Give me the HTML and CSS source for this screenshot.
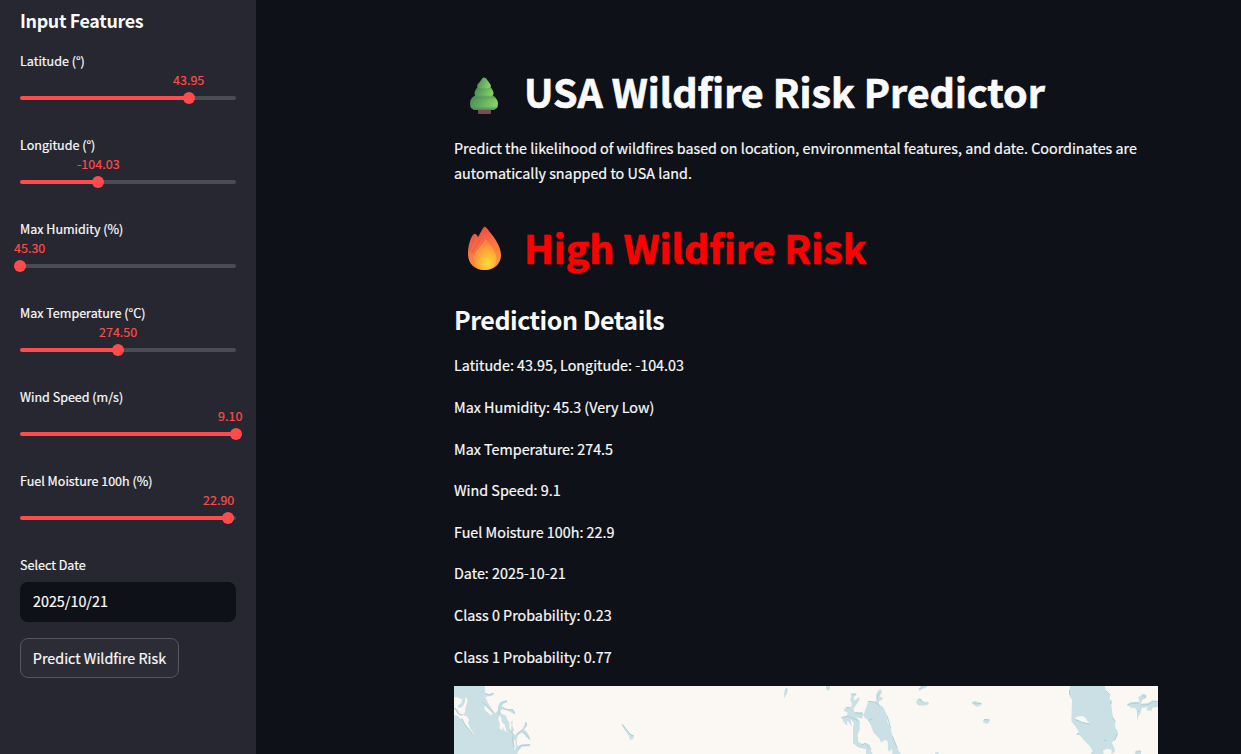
FILE: index.html
```html
<!DOCTYPE html>
<html lang="en">
<head>
<meta charset="utf-8">
<title>USA Wildfire Risk Predictor</title>
<link rel="stylesheet" href="styles.css">
</head>
<body>
<div class="app">
  <aside class="sidebar">
    <h3 class="sidebar-title">Input Features</h3>
    <div class="controls">
      <div class="slider" style="--pos:78.2%;--offset:153px"><label class="label">Latitude (°)</label><span class="value">43.95</span><div class="track"><i class="thumb"></i></div></div>
      <div class="slider" style="--pos:36.1%;--offset:57px"><label class="label">Longitude (°)</label><span class="value">-104.03</span><div class="track"><i class="thumb"></i></div></div>
      <div class="slider" style="--pos:0%;--offset:-6px"><label class="label">Max Humidity (%)</label><span class="value">45.30</span><div class="track"><i class="thumb"></i></div></div>
      <div class="slider" style="--pos:45.4%;--offset:79px"><label class="label">Max Temperature (°C)</label><span class="value">274.50</span><div class="track"><i class="thumb"></i></div></div>
      <div class="slider" style="--pos:100%;--offset:198px"><label class="label">Wind Speed (m/s)</label><span class="value">9.10</span><div class="track"><i class="thumb"></i></div></div>
      <div class="slider" style="--pos:96.5%;--offset:183px"><label class="label">Fuel Moisture 100h (%)</label><span class="value">22.90</span><div class="track"><i class="thumb"></i></div></div>
      <div class="field"><label class="label">Select Date</label><div class="date">2025/10/21</div></div>
      <button class="predict">Predict Wildfire Risk</button>
    </div>
  </aside>
  <main class="main">
    <div class="content">
      <h1 class="title">
        <svg class="emoji" viewBox="0 0 60 56">
          <defs>
            <linearGradient id="leaf" x1="0" x2="1" y1="0" y2=".3"><stop offset="0" stop-color="#44875a"/><stop offset=".5" stop-color="#62ac5b"/><stop offset="1" stop-color="#83cf66"/></linearGradient>
            <linearGradient id="base" x1="0" x2="0" y1="0" y2="1"><stop offset="0" stop-color="#2f7046" stop-opacity=".55"/><stop offset=".35" stop-color="#4c8a5c" stop-opacity="0"/><stop offset=".75" stop-color="#4c8a5c" stop-opacity="0"/><stop offset="1" stop-color="#5d7b72"/></linearGradient>
          </defs>
          <rect x="24" y="42" width="13" height="6" rx="1" fill="#784d50"/>
          <path d="M22 29C17 32 16 34 16 38Q16 44 23 44H37Q44 44 44 38C44 34 42 32 38 29Z" fill="url(#leaf)"/>
          <path d="M22 29C17 32 16 34 16 38Q16 44 23 44H37Q44 44 44 38C44 34 42 32 38 29Z" fill="url(#base)"/>
          <path d="M24 21Q20.500 24 20.500 27.500Q21 31 25 31.500H35.500Q39 31 39.500 27.500Q39.500 24 36 21Z" fill="url(#leaf)"/>
          <path d="M24 21Q20.500 24 20.500 27.500Q21 31 25 31.500H35.500Q39 31 39.500 27.500Q39.500 24 36 21Z" fill="url(#base)" opacity=".7"/>
          <path d="M30 11.500Q32 11 34 15L36.500 18.500Q38 22 34 22.500H26Q22 22 23.500 18.500L26.500 15Q28.500 11 30 11.500Z" fill="url(#leaf)"/>
        </svg><span class="title-text">USA Wildfire Risk Predictor</span>
      </h1>
      <p class="intro">Predict the likelihood of wildfires based on location, environmental features, and date. Coordinates are<br>automatically snapped to USA land.</p>
      <h1 class="title risk">
        <svg class="emoji" viewBox="0 0 60 56">
          <defs>
            <linearGradient id="fire" x1=".4" x2=".7" y1="0" y2="1"><stop offset="0" stop-color="#ee4a45"/><stop offset=".5" stop-color="#fc7842"/><stop offset="1" stop-color="#ff9a3c"/></linearGradient>
            <radialGradient id="core" cx=".62" cy=".78" r=".68"><stop offset="0" stop-color="#ffd83b"/><stop offset=".55" stop-color="#ffb137"/><stop offset="1" stop-color="#fb843d"/></radialGradient>
          </defs>
          <path d="M30 5C31 4 33 6 35 9C41 16 47 25 47 33C47 42 40 48 30.500 48C21 48 14 42 14 32C14 23 17 14 20 12Q22 11 24 15C26 12 28 7 30 5Z" fill="url(#fire)"/>
          <path d="M21 13Q18 21 16 29M27 16Q23 24 17.500 31" fill="none" stroke="#d96348" stroke-width="1.500" opacity=".7"/>
          <path d="M32 18C37 23 43 30 42.500 38C42 45 37 48 30.500 48C23 48 19 43 20 36C21 30 28 25 32 18Z" fill="url(#core)"/>
          <path d="M32 18C28 25 21 30 20 36" fill="none" stroke="#ffa657" opacity=".8"/>
        </svg><span class="title-text">High Wildfire Risk</span>
      </h1>
      <h2 class="subtitle">Prediction Details</h2>
      <div class="details">
        <p>Latitude: 43.95, Longitude: -104.03</p>
        <p>Max Humidity: 45.3 (Very Low)</p>
        <p>Max Temperature: 274.5</p>
        <p>Wind Speed: 9.1</p>
        <p>Fuel Moisture 100h: 22.9</p>
        <p>Date: 2025-10-21</p>
        <p>Class 0 Probability: 0.23</p>
        <p>Class 1 Probability: 0.77</p>
      </div>
      <svg class="map" viewBox="0 0 704 68">
        <g transform="translate(-4 -6) scale(.33333)">
          <path class="water" d="M12 18H105V38L116 42 131 39V44L122 49H112L107 53 111 63 118 75 133 98 126 106 103 86 106 80 121 96 109 77 98 67 96 60 106 54 104 45 105 72 119 91 136 99 144 91 145 78 150 67 170 60 173 67 160 71 155 80 174 88 188 87 195 97V104L187 99 175 93 157 87 151 95 155 101 168 107 173 121 181 130 188 121 187 137 193 151 188 157 195 167 205 156 218 147 226 127 231 129 230 139 222 148 231 157 238 168 240 180 229 172 218 157 204 166 200 178 202 199 215 193 240 192V199L217 200 207 210 202 222H12V104L24 108 31 117 38 115 41 127 53 143 62 155 73 170V163L60 145 54 127 57 120 51 110 42 106H28L20 94 12 84Z"/>
          <path class="land" d="M12 52H22L36 58 43 54H52V67L47 80 45 96 42 103 29 102 22 88 13 82ZM35 111L49 108 57 120 51 128 42 120ZM147 104L154 113 155 125 164 134 170 157 164 153 159 141 157 151 148 145 150 133 145 119ZM178 125L185 132 183 150 178 145ZM191 183L196 179 198 203 193 210ZM103 77L110 80 129 103 122 105 104 89Z"/>
          <path class="water" d="M23 77L35 68 37 56 47 55 44 68 37 81 26 84ZM516 132L520 134 541 162 552 166 550 176 540 180 537 168 517 139Z"/>
          <path class="coast" d="M35 116L45 134 73 168M13 84L24 100 38 106M106 40L116 45 130 40M98 67L131 98M147 106V80L155 68 170 63M153 82L171 89H187L194 100M181 152L190 164 188 180 193 204M197 165L213 154 229 137 228 127M216 155L230 164 240 179M203 209L213 197 240 194M517 134L540 163 550 168"/>
        </g>
        <g transform="translate(316 -6) scale(.33333)">
          <path class="water" d="M45 27L52 24 53 36 47 47 43 56 42 42ZM168 18H180V28L174 32 168 28ZM446 27L452 18H473L467 24 458 26 449 32ZM439 63L446 55 455 57 457 65H474L477 71 470 76 447 77 439 70ZM606 67L615 62 624 67 635 68 634 75 622 80 612 76ZM639 122L645 116 660 118 658 127 651 132 640 128ZM495 218L504 216 507 222H495Z"/>
          <path class="water" d="M222 88L230 82 243 83 246 69 240 61 245 49 241 41 257 39 260 44 252 50 252 62 268 51 269 58 257 77 250 86 254 97 277 96 281 105 275 116 259 111 269 123 269 150 263 163 265 186 279 193 285 188 300 194 303 214 308 222H288V207L266 203 249 190V145L252 129 242 116 246 141 239 130 231 122 232 137 222 128 214 111 230 107 233 97 223 94ZM281 104L295 63 315 67 320 61 318 45 326 29 333 28 336 37 328 50 337 51 337 60 328 62 326 73 339 81 353 109 352 125 361 144 368 169 375 185 382 206 393 222H367L366 205 360 215 354 211 353 184 344 179 334 188 327 174 311 158 302 135 294 121 283 112Z"/>
          <path class="coast" d="M46 31L52 26M447 28L458 22M447 57L460 67M606 68L620 71 634 70M642 119L657 120M245 43H257M242 83H228M215 113L235 109 265 122M255 98L278 102M295 64L315 66 330 78M320 59L327 37M294 122L308 116M352 109L362 145M303 209L287 190 274 195M367 169L382 205"/>
        </g>
        <g transform="translate(546 -6) scale(.33333)">
          <path class="water" d="M210 18H315L316 31 331 45 329 57 335 64 334 78 336 91 339 113 345 123 346 145 353 153 353 165 344 181 335 188 344 205V216L334 222 335 209 321 206 309 212 311 222H274L279 215 269 198 252 181 239 166 230 163 236 155 227 140 214 124 216 59 208 46V32ZM381 74L388 68 400 66 419 65 414 51 423 48 428 41 440 45 438 53 426 61 423 71 445 69 457 61 474 63V81L457 83 455 92 439 91 443 82 425 84 421 101 415 109 411 124V93L405 84 395 85ZM404 216L411 211 424 213 423 222H407Z"/>
          <path class="land" d="M224 115L231 110 247 108 257 114 261 122 269 130 249 127Z"/>
          <path class="coast" d="M209 30V45M317 32L330 45M226 119L245 127 271 133M334 62L332 72M338 112L347 125M229 163L237 162M312 181H321M344 181L352 161M424 48H438L433 55M382 76L394 70 416 70M423 75L444 74 459 65 474 64M419 92L411 97M407 217L423 213M274 219L281 215"/>
        </g>
      </svg>
    </div>
  </main>
</div>
</body>
</html>
```
FILE: styles.css
```css
* { box-sizing: border-box; }
body { margin: 0; background: #0e1117; color: #fafafa; font-family: "Noto Sans CJK SC", "Source Sans Pro", sans-serif; font-size: 14.33px; overflow: hidden; -webkit-text-stroke: 0.2px; }
h1, h2, h3, p { margin: 0; }
.app { display: flex; height: 754px; overflow: hidden; }
.sidebar { width: 256px; flex: none; padding: 8px 20px 0; background: #262730; }
.sidebar-title { font-size: 17.9px; line-height: 24px; font-weight: 600; height: 43px; letter-spacing: -0.35px; -webkit-text-stroke: 0; }
.controls { display: flex; flex-direction: column; gap: 16px; }
.slider { height: 68px; display: flex; flex-direction: column; align-items: flex-start; }
.label { display: block; font-size: 12.54px; line-height: 20px; height: 20px; white-space: nowrap; }
.value { margin-left: var(--offset); color: #ff4b4b; font-size: 12.54px; line-height: 18px; height: 18px; white-space: nowrap; }
.track { position: relative; width: 100%; height: 4px; margin-top: 7px; border-radius: 2px; background: linear-gradient(to right, #ff4b4b var(--pos), #4a4b56 var(--pos)); }
.thumb { position: absolute; left: var(--pos); top: -4px; width: 12px; height: 12px; margin-left: -6px; border-radius: 50%; background: #ff4b4b; }
.date { margin-top: 7px; height: 40px; padding: 0 13px; border-radius: 8px; background: #0e1117; line-height: 38px; }
.predict { align-self: flex-start; width: 159px; height: 40px; padding: 0; border: 1px solid #55565f; border-radius: 8px; background: #2b2c36; color: #fafafa; font: inherit; line-height: 38px; white-space: nowrap; }
.main { flex: 1; padding: 66px 0 0 198px; }
.content { width: 704px; }
.title { display: flex; align-items: flex-start; height: 56px; font-size: 39.4px; line-height: 50px; font-weight: 700; white-space: nowrap; -webkit-text-stroke: 0.7px; }
.emoji { width: 60px; height: 56px; margin-right: 10px; flex: none; }
.intro { margin-top: 13px; line-height: 25px; white-space: nowrap; }
.risk { margin-top: 37px; color: #ff0000; }
.subtitle { margin-top: 23px; font-size: 25.07px; line-height: 36px; font-weight: 600; letter-spacing: -0.5px; -webkit-text-stroke: 0; }
.details { display: flex; flex-direction: column; gap: 16px; margin-top: 15.4px; }
.details p { line-height: 25.6px; height: 25.6px; }
.map { display: block; width: 704px; height: 68px; margin-top: 16.8px; background: #fbf8f3; }
.water { fill: #cbe0e4; }
.land { fill: #fbf8f3; }
.coast { fill: none; stroke: #acd0d7; stroke-width: 3; }
```
